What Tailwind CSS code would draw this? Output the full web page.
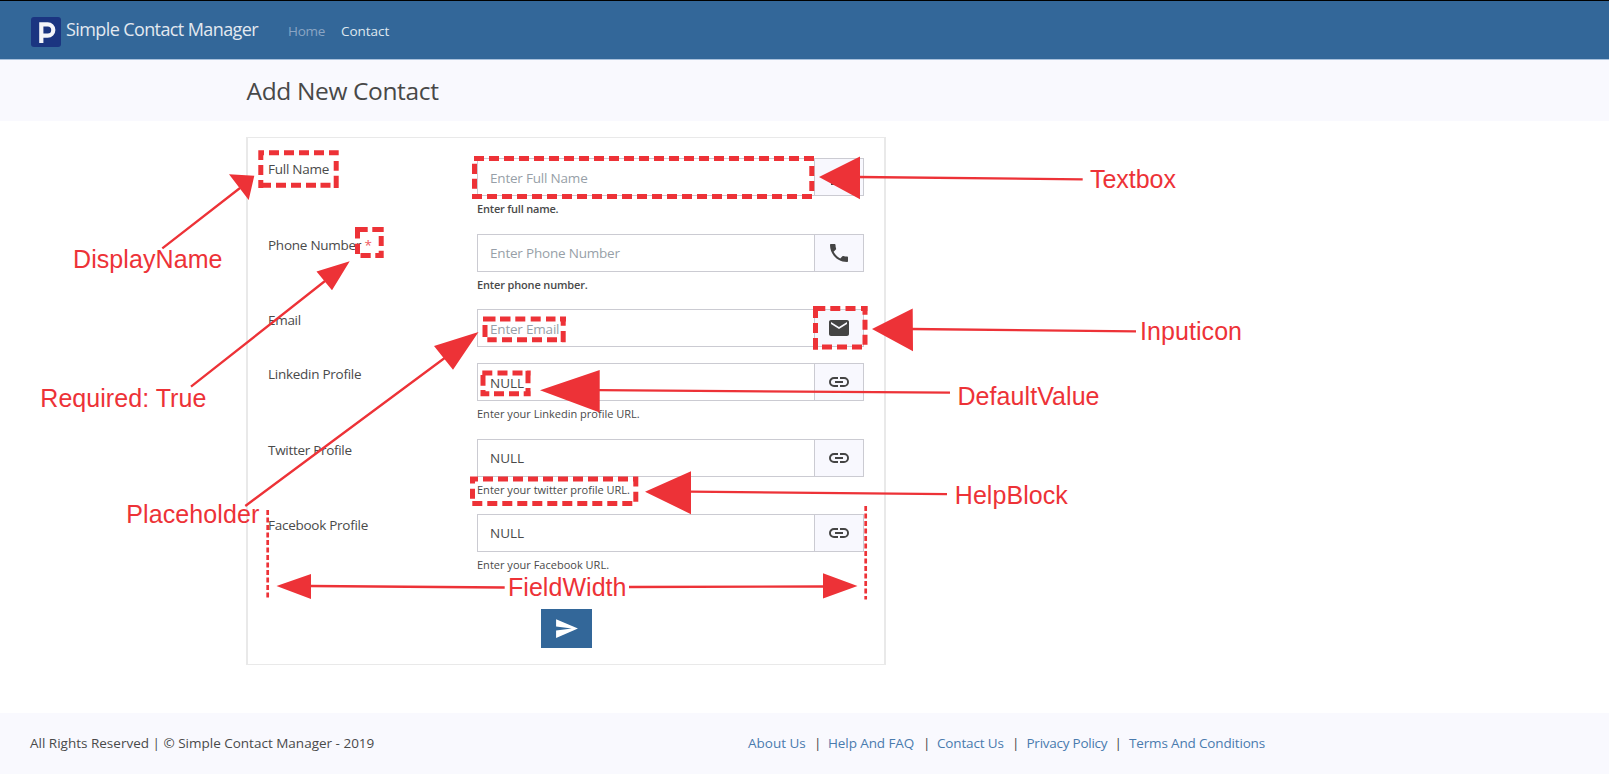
<!DOCTYPE html>
<html lang="en">
<head>
<meta charset="utf-8">
<title>Simple Contact Manager</title>
<script src="https://cdn.jsdelivr.net/npm/@tailwindcss/browser@4"></script>
</head>
<body class="relative h-[778px] w-[1609px] overflow-hidden bg-white font-['Open_Sans',sans-serif] text-[13.5px] text-[#4a4a4a]">

<nav class="flex h-[60px] items-center border-t border-b border-t-black border-b-[#a9c1dc] bg-[#336799] pl-[31px]">
  <svg class="mt-[3px] h-[30px] w-[30px] shrink-0" viewBox="0 0 30 30">
    <rect width="30" height="30" rx="3" fill="#1b3581"/>
    <path d="M10.300 26V7.400H16.700a5.600 5.600 0 0 1 0 11.200H11" fill="none" stroke="#f4f5fa" stroke-width="4.200"/>
  </svg>
  <span class="mt-[-2px] ml-[5px] w-[222px] text-[18px] tracking-[-0.6px] whitespace-nowrap text-[#e3e9f0]">Simple Contact Manager</span>
  <a class="mt-[2px] w-[53px] tracking-[-0.3px] text-[#8aa5c4]">Home</a>
  <a class="mt-[2px] tracking-[-0.05px] text-[#dfe7ef]">Contact</a>
</nav>

<header class="flex h-[61px] items-center bg-[#f9f9fe] pl-[246.5px]">
  <h1 class="mt-[2px] text-[24.5px] tracking-[-0.36px] text-[#484848]">Add New Contact</h1>
</header>

<main class="h-[592px] pt-4 pl-[246px]">
  <form class="flex h-[528px] w-[640px] flex-col border-2 border-t-1 border-b-1 border-[#e9e9e9] pt-5 pl-5">
    <div class="flex h-[75.5px]">
      <label class="w-[209px] leading-[22px] tracking-[-0.25px]">Full Name</label>
      <div>
        <div class="flex h-[38px] w-[387px] border border-[#cbcbd2]">
          <input class="w-[336px] px-3 pt-0.5 tracking-[-0.2px] placeholder:text-[#979fa8]" placeholder="Enter Full Name">
          <span class="flex flex-1 items-center justify-center border-l border-[#cbcbd2] bg-[#f8f8fe]"><svg class="h-6 w-6" viewBox="0 0 24 24" fill="#444"><path d="M12 12a4 4 0 1 0 0-8 4 4 0 0 0 0 8zm0 2c-2.670 0-8 1.340-8 4v2h16v-2c0-2.660-5.330-4-8-4z"/></svg></span>
        </div>
        <p class="pt-1 text-[11px] leading-[18px] font-semibold tracking-[-0.2px]">Enter full name.</p>
      </div>
    </div>
    <div class="flex h-[75.5px]">
      <label class="w-[209px] leading-[22px] tracking-[-0.25px]">Phone Number <span class="text-[#f05a5f]">*</span></label>
      <div>
        <div class="flex h-[38px] w-[387px] border border-[#cbcbd2]">
          <input class="w-[336px] px-3 pt-0.5 tracking-[-0.2px] placeholder:text-[#979fa8]" placeholder="Enter Phone Number">
          <span class="flex flex-1 items-center justify-center border-l border-[#cbcbd2] bg-[#f8f8fe]"><svg class="h-6 w-6" viewBox="0 0 24 24" fill="#444"><path d="M6.620 10.790c1.440 2.830 3.760 5.140 6.590 6.590l2.200-2.200c.270-.270.670-.360 1.020-.240 1.120.370 2.330.570 3.570.570.550 0 1 .450 1 1V20c0 .550-.450 1-1 1-9.390 0-17-7.610-17-17 0-.550.450-1 1-1h3.500c.550 0 1 .450 1 1 0 1.250.200 2.450.570 3.570.110.350.030.740-.250 1.020l-2.200 2.200z"/></svg></span>
        </div>
        <p class="pt-1 text-[11px] leading-[18px] font-semibold tracking-[-0.15px]">Enter phone number.</p>
      </div>
    </div>
    <div class="flex h-[54.3px]">
      <label class="w-[209px] leading-[22px] tracking-[-0.3px]">Email</label>
      <div>
        <div class="flex h-[38px] w-[387px] border border-[#cbcbd2]">
          <input class="w-[336px] px-3 pt-0.5 tracking-[-0.2px] placeholder:text-[#979fa8]" placeholder="Enter Email">
          <span class="flex flex-1 items-center justify-center border-l border-[#cbcbd2] bg-[#f8f8fe]"><svg class="h-6 w-6" viewBox="0 0 24 24" fill="#444"><path d="M20 4H4c-1.100 0-1.990.900-1.990 2L2 18c0 1.100.900 2 2 2h16c1.100 0 2-.900 2-2V6c0-1.100-.900-2-2-2zm0 4l-8 5-8-5V6l8 5 8-5v2z"/></svg></span>
        </div>
      </div>
    </div>
    <div class="flex h-[75.5px]">
      <label class="w-[209px] leading-[22px] tracking-[-0.27px]">Linkedin Profile</label>
      <div>
        <div class="flex h-[38px] w-[387px] border border-[#cbcbd2]">
          <input class="w-[336px] px-3 pt-0.5" value="NULL">
          <span class="flex flex-1 items-center justify-center border-l border-[#cbcbd2] bg-[#f8f8fe]"><svg class="h-6 w-6" viewBox="0 0 24 24" fill="#444"><path d="M3.900 12c0-1.710 1.390-3.100 3.100-3.100h4V7H7a5 5 0 0 0 0 10h4v-1.900H7c-1.710 0-3.100-1.390-3.100-3.100zM8 13h8v-2H8v2zm9-6h-4v1.900h4a3.100 3.100 0 0 1 0 6.200h-4V17h4a5 5 0 0 0 0-10z"/></svg></span>
        </div>
        <p class="pt-1 text-[11px] leading-[18px] font-medium tracking-[0.01px]">Enter your Linkedin profile URL.</p>
      </div>
    </div>
    <div class="flex h-[75.5px]">
      <label class="w-[209px] leading-[22px] tracking-[-0.3px]">Twitter Profile</label>
      <div>
        <div class="flex h-[38px] w-[387px] border border-[#cbcbd2]">
          <input class="w-[336px] px-3" value="NULL">
          <span class="flex flex-1 items-center justify-center border-l border-[#cbcbd2] bg-[#f8f8fe]"><svg class="h-6 w-6" viewBox="0 0 24 24" fill="#444"><path d="M3.900 12c0-1.710 1.390-3.100 3.100-3.100h4V7H7a5 5 0 0 0 0 10h4v-1.900H7c-1.710 0-3.100-1.390-3.100-3.100zM8 13h8v-2H8v2zm9-6h-4v1.900h4a3.100 3.100 0 0 1 0 6.200h-4V17h4a5 5 0 0 0 0-10z"/></svg></span>
        </div>
        <p class="pt-1 text-[11px] leading-[18px] font-medium tracking-[0.01px]">Enter your twitter profile URL.</p>
      </div>
    </div>
    <div class="flex h-[94.500px]">
      <label class="w-[209px] leading-[22px] tracking-[-0.27px]">Facebook Profile</label>
      <div>
        <div class="flex h-[38px] w-[387px] border border-[#cbcbd2]">
          <input class="w-[336px] px-3" value="NULL">
          <span class="flex flex-1 items-center justify-center border-l border-[#cbcbd2] bg-[#f8f8fe]"><svg class="h-6 w-6" viewBox="0 0 24 24" fill="#444"><path d="M3.900 12c0-1.710 1.390-3.100 3.100-3.100h4V7H7a5 5 0 0 0 0 10h4v-1.900H7c-1.710 0-3.100-1.390-3.100-3.100zM8 13h8v-2H8v2zm9-6h-4v1.900h4a3.100 3.100 0 0 1 0 6.200h-4V17h4a5 5 0 0 0 0-10z"/></svg></span>
        </div>
        <p class="pt-1 text-[11px] leading-[18px] font-medium tracking-[0.01px]">Enter your Facebook URL.</p>
      </div>
    </div>
    <button type="button" class="ml-[273px] flex h-[39px] w-[51px] items-center justify-center bg-[#336799]" aria-label="Send">
      <svg class="h-[25px] w-[25px]" viewBox="0 0 24 24" fill="#fff"><path d="M2.010 21L23 12 2.010 3 2 10l15 2-15 2z"/></svg>
    </button>
  </form>
</main>

<footer class="flex h-[61px] items-center bg-[#f9f9fe] pl-[30px] whitespace-nowrap">
  <p class="w-[718px]">All Rights Reserved | © Simple Contact Manager - 2019</p>
  <div class="flex text-[#4a7bae]">
    <a class="w-[66px]">About Us</a><span class="w-[14px] text-[#444]">|</span>
    <a class="w-[95px] tracking-[-0.1px]">Help And FAQ</a><span class="w-[14px] text-[#444]">|</span>
    <a class="w-[75px] tracking-[-0.15px]">Contact Us</a><span class="w-[14.5px] text-[#444]">|</span>
    <a class="w-[88px] tracking-[-0.25px]">Privacy Policy</a><span class="w-[14.5px] text-[#444]">|</span>
    <a class="tracking-[-0.16px]">Terms And Conditions</a>
  </div>
</footer>

<!-- Annotation layer -->
<svg class="pointer-events-none absolute inset-0 h-[778px] w-[1609px]" viewBox="0 0 1609 778">
  <!-- dashed frames -->
  <g fill="none" stroke="#ed3237" stroke-width="5">
    <!-- label -->
    <path d="M258.3 152.8H264M269 152.8h10M284 152.8h10M299 152.8h10M314 152.8h10M329 152.8h9.700M336.200 161v9.800M336.200 175.700V188M258.300 185.300H271M276 185.300h10M291 185.300h10M306 185.300h10M320.500 185.300h10M335.500 185.300h3.200M260.800 150.300V160M260.800 165v10M260.800 180v8"/>
    <!-- asterisk -->
    <path d="M355 229.500h12.700M372.300 229.500h11.400M357.500 227v11.500M357.500 243.700v10.300M360.500 255.500h10.200M375.300 255.500h8.400M381.200 236v10M381.200 250.700V258"/>
    <!-- textbox -->
    <path d="M474 158.500H814.700" stroke-dasharray="10 5"/>
    <path d="M472 196.500H812" stroke-dasharray="10 5"/>
    <path d="M474.500 163.700v10.300M474.500 178.700v10M811.800 166v10M811.800 181v10"/>
    <!-- placeholder -->
    <path d="M483 319H495.500M500 319h10.500M515.300 319h10M530.700 319h10M546 319h9.500M560 319h6M563.200 316.700v9M563.200 331v11M485 325v12M487.300 339.700h9.400M502 339.700h10M517 339.700h10M532 339.700h10M547 339.700h10M561.700 339.700h4"/>
    <!-- value -->
    <path d="M482.300 373h10M497.500 373h10M512.500 373h10M527 373h3.700M528 370.700v12.600M528 388v8.300M483 375v10.700M483 390v6.300M480.500 393.800h8.800M494 393.800h10M509 393.800h10M523.700 393.800h7"/>
    <!-- input icon -->
    <path d="M813 308.500h12.300M830.300 308.500h10M845.500 308.500h10M861 308.500h6.700M865 306v8.700M865 319.700v10M865 334.700v10M815.500 306v12M815.500 323v10M815.500 338v11.700M822 347h10M837 347h10M852 347h10"/>
    <!-- help text -->
    <path d="M470 479h8M483 479h10M498 479h10M513 479h10M528 479h10M543 479h10M558 479h10M573 479h10M588 479h10M603 479h10M618 479h10M633 479h5.300M635.800 477v9.500M635.800 491.700v10M472.500 477v6.500M472.500 488.700v10"/>
    <path d="M472.300 503.500H633" stroke-dasharray="10 5"/>
  </g>
  <!-- width limits -->
  <path d="M267.700 510V597.500M865.700 506V599.500" fill="none" stroke="#ed3237" stroke-width="2.700" stroke-dasharray="5 2.500"/>
  <!-- arrow shafts -->
  <path d="M858 177 1082.700 179.300M911 329 1136 331.300M599 390.200 950 392.600M690 491.600 947 494.200M162.300 248.300 240 188M191 386.700 325 281M245.300 506 446 357M310 586 504.700 587.500M629 587 824 586.500" fill="none" stroke="#ed3237" stroke-width="2.300"/>
  <!-- arrow heads -->
  <path d="M819 177 860 156.500V199.300ZM872 329 912.700 308.500 913 351.200ZM540 390.300 599.700 370V412.500ZM645 491.700 691 471.300V514.200ZM254.300 175.700 229 174.300 248.700 200ZM349.700 261.300 316.500 271.500 332 290.300ZM478.500 332 434 346 453 369.700ZM276.500 586 311 574V599ZM857.500 586 823 573.300V598.500Z" fill="#ed3237"/>
  <!-- captions -->
  <g fill="#ed3237" font-family="'Liberation Sans',sans-serif" font-size="25">
    <text x="1090" y="187.700" textLength="86">Textbox</text>
    <text x="1140" y="340.400" textLength="102">Inputicon</text>
    <text x="957.500" y="404.700" textLength="142">DefaultValue</text>
    <text x="954.800" y="503.800" textLength="113">HelpBlock</text>
    <text x="73" y="268" textLength="149.500">DisplayName</text>
    <text x="40.300" y="407" textLength="166">Required: True</text>
    <text x="126.300" y="523" textLength="133">Placeholder</text>
    <text x="508" y="596.400" textLength="118.500">FieldWidth</text>
  </g>
</svg>
</body>
</html>
